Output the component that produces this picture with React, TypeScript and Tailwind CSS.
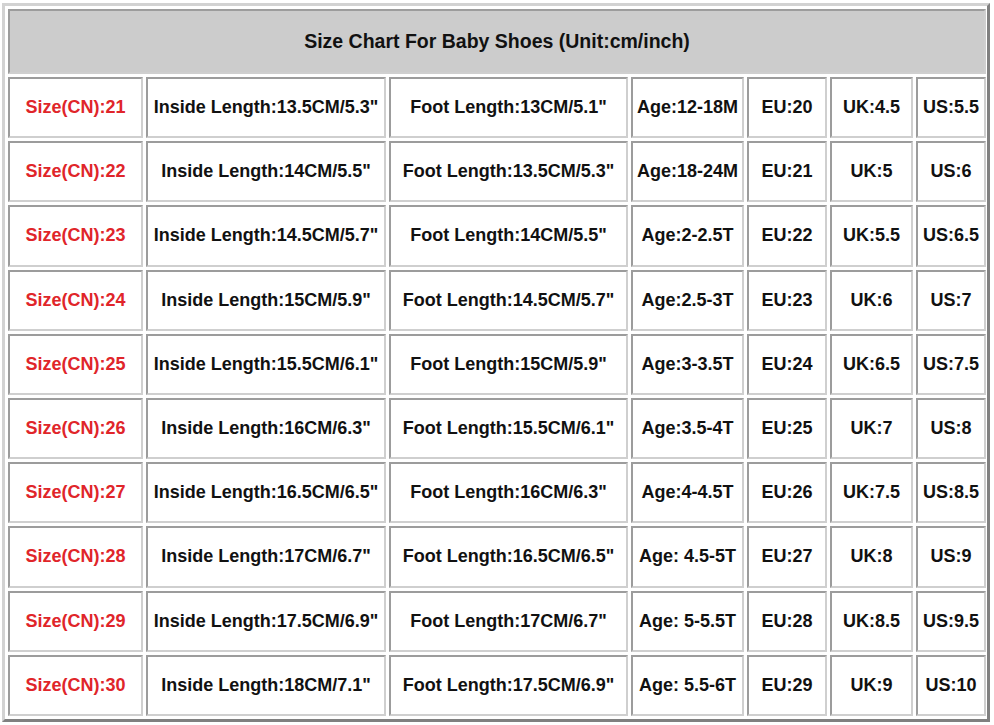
const rows = [
  ["21", 'Inside Length:13.5CM/5.3"', 'Foot Length:13CM/5.1"', "Age:12-18M", "EU:20", "UK:4.5", "US:5.5"],
  ["22", 'Inside Length:14CM/5.5"', 'Foot Length:13.5CM/5.3"', "Age:18-24M", "EU:21", "UK:5", "US:6"],
  ["23", 'Inside Length:14.5CM/5.7"', 'Foot Length:14CM/5.5"', "Age:2-2.5T", "EU:22", "UK:5.5", "US:6.5"],
  ["24", 'Inside Length:15CM/5.9"', 'Foot Length:14.5CM/5.7"', "Age:2.5-3T", "EU:23", "UK:6", "US:7"],
  ["25", 'Inside Length:15.5CM/6.1"', 'Foot Length:15CM/5.9"', "Age:3-3.5T", "EU:24", "UK:6.5", "US:7.5"],
  ["26", 'Inside Length:16CM/6.3"', 'Foot Length:15.5CM/6.1"', "Age:3.5-4T", "EU:25", "UK:7", "US:8"],
  ["27", 'Inside Length:16.5CM/6.5"', 'Foot Length:16CM/6.3"', "Age:4-4.5T", "EU:26", "UK:7.5", "US:8.5"],
  ["28", 'Inside Length:17CM/6.7"', 'Foot Length:16.5CM/6.5"', "Age: 4.5-5T", "EU:27", "UK:8", "US:9"],
  ["29", 'Inside Length:17.5CM/6.9"', 'Foot Length:17CM/6.7"', "Age: 5-5.5T", "EU:28", "UK:8.5", "US:9.5"],
  ["30", 'Inside Length:18CM/7.1"', 'Foot Length:17.5CM/6.9"', "Age: 5.5-6T", "EU:29", "UK:9", "US:10"],
];

// inset cell border like an old html table
const cell =
  "flex items-center justify-center border-2 border-t-[#9c9c9c] border-l-[#9c9c9c] border-r-[#cfcfcf] border-b-[#cfcfcf] bg-white whitespace-nowrap";

export default function App() {
  return (
    <div
      className="w-[994px] h-[725px] bg-white pl-[2px] pt-[3px]"
      style={{ fontFamily: '"Liberation Sans", Arial, sans-serif' }}
    >
      <div className="w-[988px] h-[719px] border-[3px] border-t-[#d2d2d2] border-l-[#d2d2d2] border-r-[#808080] border-b-[#808080] p-[3px]">
        <div className="grid grid-cols-[135px_240px_239px_113px_80px_83px_70px] grid-rows-[65px] auto-rows-[61.2px] gap-[3px] text-[18px] font-bold text-[#111111]">
          <div className={`${cell} col-span-7 !bg-[#cccccc] text-[19.5px]`}>
            Size Chart For Baby Shoes (Unit:cm/inch)
          </div>
          {rows.map((r) => (
            <div key={r[0]} className="contents">
              <div className={`${cell} text-[#e0252a]`}>Size(CN):{r[0]}</div>
              {r.slice(1).map((v, i) => (
                <div key={i} className={cell}>
                  {v}
                </div>
              ))}
            </div>
          ))}
        </div>
      </div>
    </div>
  );
}
